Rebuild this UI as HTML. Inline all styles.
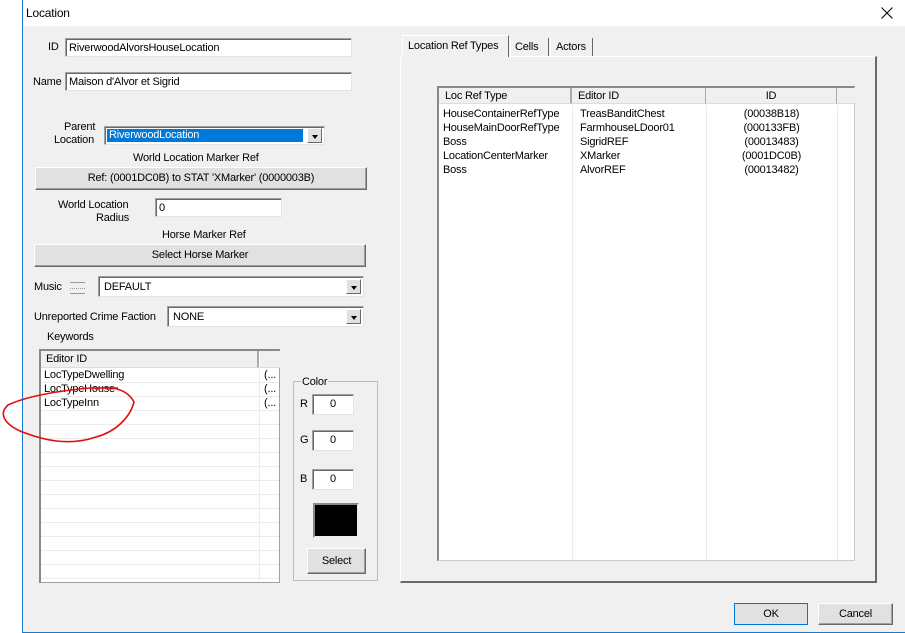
<!DOCTYPE html>
<html><head><style>
*{box-sizing:border-box;margin:0;padding:0}
body{width:905px;height:633px;background:#fff;position:relative;overflow:hidden;font-family:"Liberation Sans",sans-serif;font-size:11px;color:#000;letter-spacing:-0.2px}
.a{position:absolute}
.win{left:22px;top:0;width:883px;height:633px;border-left:1px solid #1979ca;border-bottom:1px solid #1979ca;background:#f0f0f0}
.tb{left:22px;top:0;width:883px;height:26px;background:#fff;border-left:1px solid #1979ca}
.in{background:#fff;border:1px solid #a0a0a0;border-right-color:#e3e3e3;border-bottom-color:#e3e3e3;box-shadow:inset 1px 1px 0 #696969;padding:3px 3px;white-space:nowrap;overflow:hidden}
.btn{background:#e1e1e1;border:1px solid #fff;border-right-color:#696969;border-bottom-color:#696969;box-shadow:inset -1px -1px 0 #a0a0a0;text-align:center;white-space:nowrap}
.dd{position:absolute;right:2px;top:2px;width:15px;height:15px;background:#e1e1e1;border:1px solid #fff;border-right-color:#696969;border-bottom-color:#696969}
.dd:after{content:"";position:absolute;left:4px;top:6px;border-left:3px solid transparent;border-right:3px solid transparent;border-top:4px solid #000}
.t{position:absolute;white-space:nowrap}
.row{position:absolute;left:0;right:0;height:14px;border-bottom:1px solid #ececec}
</style></head><body>
<div class="a win"></div>
<div class="a tb"></div>
<div class="t" style="left:26px;top:6px;font-size:12px">Location</div>
<svg class="a" style="left:881px;top:7px" width="12" height="12"><path d="M0.5,0.5 L11.5,11.5 M11.5,0.5 L0.5,11.5" stroke="#000" stroke-width="1"/></svg>

<div class="t" style="left:48px;top:41px">ID</div>
<div class="a in" style="left:65px;top:38px;width:287px;height:19px">RiverwoodAlvorsHouseLocation</div>
<div class="t" style="left:33px;top:76px">Name</div>
<div class="a in" style="left:65px;top:72px;width:287px;height:19px">Maison d'Alvor et Sigrid</div>

<div class="t" style="left:64px;top:121px">Parent</div>
<div class="t" style="left:54px;top:134px">Location</div>
<div class="a in" style="left:104px;top:126px;width:221px;height:19px;padding:2px"><div style="background:#0078d7;color:#fff;width:196px;height:13px;line-height:13px;padding-left:2px">RiverwoodLocation</div><div class="dd" style="top:1px"></div></div>
<div class="t" style="left:133px;top:152px">World Location Marker Ref</div>
<div class="a btn" style="left:35px;top:167px;width:332px;height:23px;line-height:21px">Ref: (0001DC0B) to STAT 'XMarker' (0000003B)</div>
<div class="t" style="left:58px;top:199px">World Location</div>
<div class="t" style="left:96px;top:212px">Radius</div>
<div class="a in" style="left:155px;top:198px;width:127px;height:19px">0</div>
<div class="t" style="left:162px;top:229px">Horse Marker Ref</div>
<div class="a btn" style="left:34px;top:244px;width:332px;height:23px;line-height:21px">Select Horse Marker</div>

<div class="t" style="left:34px;top:281px">Music</div>
<div class="a" style="left:70px;top:282px;width:15px;height:12px;border-top:1px solid #999;border-bottom:1px solid #999"><div style="border-top:1px dotted #999;margin-top:5px"></div></div>
<div class="a in" style="left:98px;top:276px;width:266px;height:21px;padding:4px 5px">DEFAULT<div class="dd"></div></div>
<div class="t" style="left:34px;top:311px">Unreported Crime Faction</div>
<div class="a in" style="left:167px;top:306px;width:197px;height:21px;padding:4px 5px">NONE<div class="dd"></div></div>
<div class="t" style="left:47px;top:331px">Keywords</div>

<div class="a" style="left:39px;top:349px;width:241px;height:234px;background:#fff;border:1px solid #a0a0a0;border-left:2px solid #888;border-top:2px solid #888">
 <div class="a" style="left:0;top:0;width:218px;height:17px;background:#f0f0f0;border-bottom:1px solid #ddd;border-right:2px solid #aaa;padding:2px 5px">Editor ID</div>
 <div class="a" style="left:219px;top:0;width:20px;height:17px;background:#f0f0f0;border-bottom:1px solid #ddd"></div>
 <div class="a" style="left:0;top:18px;right:0;bottom:0">
  <div class="row" style="top:0"><span class="t" style="left:3px;top:0">LocTypeDwelling</span><span class="t" style="left:223px">(...</span></div>
  <div class="row" style="top:14px"><span class="t" style="left:3px;top:0">LocTypeHouse</span><span class="t" style="left:223px">(...</span></div>
  <div class="row" style="top:28px"><span class="t" style="left:3px;top:0">LocTypeInn</span><span class="t" style="left:223px">(...</span></div>
  <div class="row" style="top:42px"></div><div class="row" style="top:56px"></div><div class="row" style="top:70px"></div><div class="row" style="top:84px"></div><div class="row" style="top:98px"></div><div class="row" style="top:112px"></div><div class="row" style="top:126px"></div><div class="row" style="top:140px"></div><div class="row" style="top:154px"></div><div class="row" style="top:168px"></div><div class="row" style="top:182px"></div><div class="row" style="top:196px"></div>
  <div class="a" style="left:218px;top:0;width:1px;height:212px;background:#ececec"></div>
 </div>
</div>

<div class="a" style="left:293px;top:381px;width:85px;height:200px;border:1px solid #bbb"></div>
<div class="t" style="left:301px;top:376px;background:#f0f0f0;padding:0 1px">Color</div>
<div class="t" style="left:300px;top:398px">R</div>
<div class="a in" style="left:312px;top:394px;width:42px;height:21px;text-align:center">0</div>
<div class="t" style="left:300px;top:434px">G</div>
<div class="a in" style="left:312px;top:430px;width:42px;height:21px;text-align:center">0</div>
<div class="t" style="left:300px;top:473px">B</div>
<div class="a in" style="left:312px;top:469px;width:42px;height:21px;text-align:center">0</div>
<div class="a" style="left:313px;top:503px;width:46px;height:35px;background:#000;border:2px solid #888;border-right-color:#eee;border-bottom-color:#eee"></div>
<div class="a btn" style="left:307px;top:548px;width:59px;height:26px;line-height:24px">Select</div>

<!-- tabs -->
<div class="a" style="left:400px;top:56px;width:477px;height:527px;border:1px solid #fff;border-right:2px solid #696969;border-bottom:2px solid #696969"></div>
<div class="a" style="left:402px;top:35px;width:107px;height:22px;background:#f0f0f0;border:1px solid #fff;border-bottom:none;border-right:1px solid #696969;padding:4px 5px;white-space:nowrap">Location Ref Types</div>
<div class="a" style="left:510px;top:38px;width:39px;height:18px;border-left:1px solid #fff;border-right:1px solid #696969;padding:3px 4px">Cells</div>
<div class="a" style="left:550px;top:38px;width:43px;height:18px;border-left:1px solid #fff;border-right:1px solid #696969;padding:3px 5px">Actors</div>

<div class="a" style="left:437px;top:86px;width:418px;height:475px;background:#fff;border:1px solid #ccc;border-left:2px solid #888;border-top:2px solid #888">
 <div class="a" style="left:0;top:0;width:133px;height:16px;background:#f0f0f0;border-right:2px solid #aaa;border-bottom:1px solid #ddd;padding:2px 6px">Loc Ref Type</div>
 <div class="a" style="left:133px;top:0;width:134px;height:16px;background:#f0f0f0;border-right:1px solid #aaa;border-bottom:1px solid #ddd;padding:2px 6px">Editor ID</div>
 <div class="a" style="left:267px;top:0;width:131px;height:16px;background:#f0f0f0;border-right:1px solid #aaa;border-bottom:1px solid #ddd;text-align:center;padding-top:2px">ID</div>
 <div class="a" style="left:398px;top:0;width:20px;height:16px;background:#f0f0f0;border-bottom:1px solid #ddd"></div>
 <div class="a" style="left:133px;top:17px;width:1px;height:455px;background:#ececec"></div>
 <div class="a" style="left:267px;top:17px;width:1px;height:455px;background:#ececec"></div>
 <div class="a" style="left:398px;top:17px;width:1px;height:455px;background:#ececec"></div>
 <div class="a" style="left:4px;top:19px;line-height:14px">HouseContainerRefType<br>HouseMainDoorRefType<br>Boss<br>LocationCenterMarker<br>Boss</div>
 <div class="a" style="left:141px;top:19px;line-height:14px">TreasBanditChest<br>FarmhouseLDoor01<br>SigridREF<br>XMarker<br>AlvorREF</div>
 <div class="a" style="left:267px;top:19px;width:131px;text-align:center;line-height:14px">(00038B18)<br>(000133FB)<br>(00013483)<br>(0001DC0B)<br>(00013482)</div>
</div>

<div class="a btn" style="left:734px;top:603px;width:74px;height:22px;line-height:20px;border:1px solid #0078d7;box-shadow:none">OK</div>
<div class="a btn" style="left:818px;top:603px;width:75px;height:22px;line-height:20px">Cancel</div>

<svg class="a" style="left:0;top:0" width="905" height="633"><path d="M95,389 C112,385 128,390 134,402 C130,418 115,432 96,437 C70,446 45,441 20,431 C5,424 -2,414 8,405 C25,397 55,391 90,388 L118,388" fill="none" stroke="#e01010" stroke-width="1.6"/></svg>
</body></html>
